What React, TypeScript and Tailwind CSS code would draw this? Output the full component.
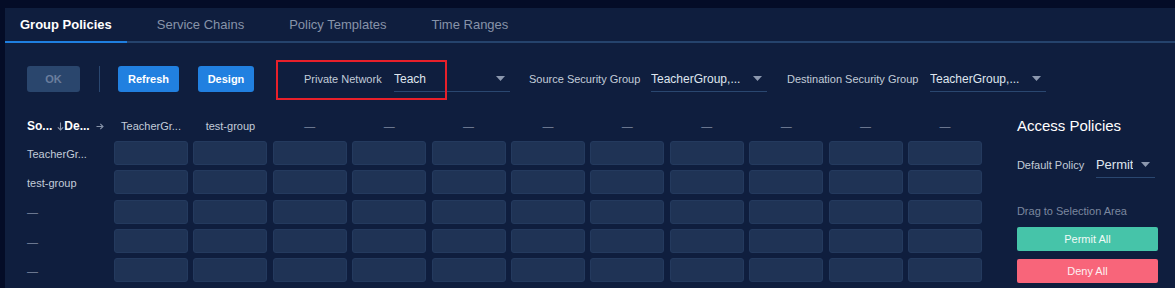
import { ReactNode } from 'react';

const tabs = ['Group Policies', 'Service Chains', 'Policy Templates', 'Time Ranges'];
const columns = ['TeacherGr...', 'test-group', '—', '—', '—', '—', '—', '—', '—', '—', '—'];
const rows = ['TeacherGr...', 'test-group', '—', '—', '—'];

function Caret() {
  return (
    <svg width="9" height="5" viewBox="0 0 9 5" className="shrink-0">
      <path d="M0 0 L9 0 L4.5 5 Z" fill="#8c98ae" />
    </svg>
  );
}

function ArrowDown() {
  return (
    <svg width="7" height="9" viewBox="0 0 7 9" className="shrink-0">
      <path d="M3.5 0.5 V8 M0.8 5.3 L3.5 8 L6.2 5.3" stroke="#8793a9" strokeWidth="1.1" fill="none" />
    </svg>
  );
}

function ArrowRight() {
  return (
    <svg width="8" height="7" viewBox="0 0 8 7" className="shrink-0">
      <path d="M0.5 3.5 H7 M4.3 0.8 L7 3.5 L4.3 6.2" stroke="#8793a9" strokeWidth="1.1" fill="none" />
    </svg>
  );
}

function Select({ value, width, size = 'text-[12px]' }: { value: string; width: string; size?: string }) {
  return (
    <div className={`${width} h-[26px] flex items-center justify-between pr-[5px] border-b border-[#2a4770]`}>
      <span className={`${size} text-[#dfe5ee] truncate`}>{value}</span>
      <Caret />
    </div>
  );
}

function Field({ label, labelWidth, children }: { label: string; labelWidth: string; children: ReactNode }) {
  return (
    <div className="flex items-center">
      <span className={`${labelWidth} text-[11px] text-[#c3ccd9] whitespace-nowrap`}>{label}</span>
      {children}
    </div>
  );
}

export default function App() {
  return (
    <div className="w-[1175px] h-[288px] overflow-hidden bg-[#040c27] pt-[8px] pl-[5px] font-['Liberation_Sans',Arial,sans-serif]">
      <div className="h-[280px] bg-[#0f1e3e]">
        {/* tabs */}
        <div className="flex gap-[15px] border-b-2 border-[#25436c]">
          {tabs.map((t, i) => (
            <div
              key={t}
              className={`h-[35px] -mb-[2px] px-[15px] pt-[1px] flex items-center text-[13px] border-b-2 ${
                i === 0 ? 'font-bold text-white border-[#1f7fe0]' : 'text-[#8793a9] border-transparent'
              }`}
            >
              {t}
            </div>
          ))}
        </div>

        {/* toolbar */}
        <div className="relative mt-[23px] h-[26px] flex items-center pl-[22px]">
          <button className="w-[53px] h-[26px] rounded-[3px] bg-[#2a466d] text-[11px] font-bold text-[#6a7e9e]">OK</button>
          <div className="ml-[19px] w-px h-[26px] bg-[#2a4770]" />
          <button className="ml-[18px] w-[61px] h-[26px] rounded-[3px] bg-[#2180e0] text-[11px] font-bold text-white">Refresh</button>
          <button className="ml-[19px] w-[56px] h-[26px] rounded-[3px] bg-[#2180e0] text-[11px] font-bold text-white">Design</button>

          <div className="ml-[50px]">
            <Field label="Private Network" labelWidth="w-[90px]">
              <Select value="Teach" width="w-[116px]" />
            </Field>
          </div>
          <div className="ml-[19px]">
            <Field label="Source Security Group" labelWidth="w-[122px]">
              <Select value="TeacherGroup,..." width="w-[116px]" />
            </Field>
          </div>
          <div className="ml-[20px]">
            <Field label="Destination Security Group" labelWidth="w-[143px]">
              <Select value="TeacherGroup,..." width="w-[116px]" />
            </Field>
          </div>

          <div className="absolute left-[271px] top-[-6px] w-[171px] h-[40px] border-2 border-[#e8202a] pointer-events-none" />
        </div>

        {/* matrix + side panel */}
        <div className="mt-[24px] flex">
          <div className="pl-[22px]">
            <div className="flex h-[20px] items-center">
              <div className="w-[87px] flex items-center text-[12px] whitespace-nowrap">
                <span className="font-bold text-white">So...</span>
                <span className="ml-[5px]"><ArrowDown /></span>
                <span className="font-bold text-white">De...</span>
                <span className="ml-[6px]"><ArrowRight /></span>
              </div>
              <div className="grid grid-cols-[repeat(11,74px)] gap-x-[5.4px]">
                {columns.map((c, i) => (
                  <div key={i} className={`text-center text-[11px] ${c === '—' ? 'text-[#7f8ba2]' : 'text-[#c3ccd9]'}`}>
                    {c}
                  </div>
                ))}
              </div>
            </div>
            <div className="mt-[5px] flex flex-col gap-y-[5.3px]">
              {rows.map((r, ri) => (
                <div key={ri} className="flex h-[24px] items-center">
                  <div className={`w-[87px] pt-[2px] text-[11px] ${r === '—' ? 'text-[#7f8ba2]' : 'text-[#c3ccd9]'}`}>{r}</div>
                  <div className="grid grid-cols-[repeat(11,74px)] gap-x-[5.4px]">
                    {columns.map((_, ci) => (
                      <div key={ci} className="h-[24px] rounded-[3px] bg-[#1f3355] border border-[#243a5e]" />
                    ))}
                  </div>
                </div>
              ))}
            </div>
          </div>

          <div className="ml-[35px] w-[141px]">
            <div className="h-[20px] flex items-center text-[15px] text-white">Access Policies</div>
            <div className="mt-[16px] flex items-center">
              <span className="w-[79px] text-[11px] text-[#c3ccd9] whitespace-nowrap">Default Policy</span>
              <Select value="Permit" width="w-[59px]" size="text-[13px]" />
            </div>
            <div className="mt-[26px] h-[14px] flex items-center text-[11px] text-[#7b879e]">Drag to Selection Area</div>
            <button className="mt-[9px] w-[141px] h-[24px] rounded-[2px] bg-[#46c4a9] text-[11px] text-[#f0faf7]">Permit All</button>
            <button className="mt-[8px] w-[141px] h-[24px] rounded-[2px] bg-[#f8657a] text-[11px] text-[#fdf0f2]">Deny All</button>
          </div>
        </div>
      </div>
    </div>
  );
}
